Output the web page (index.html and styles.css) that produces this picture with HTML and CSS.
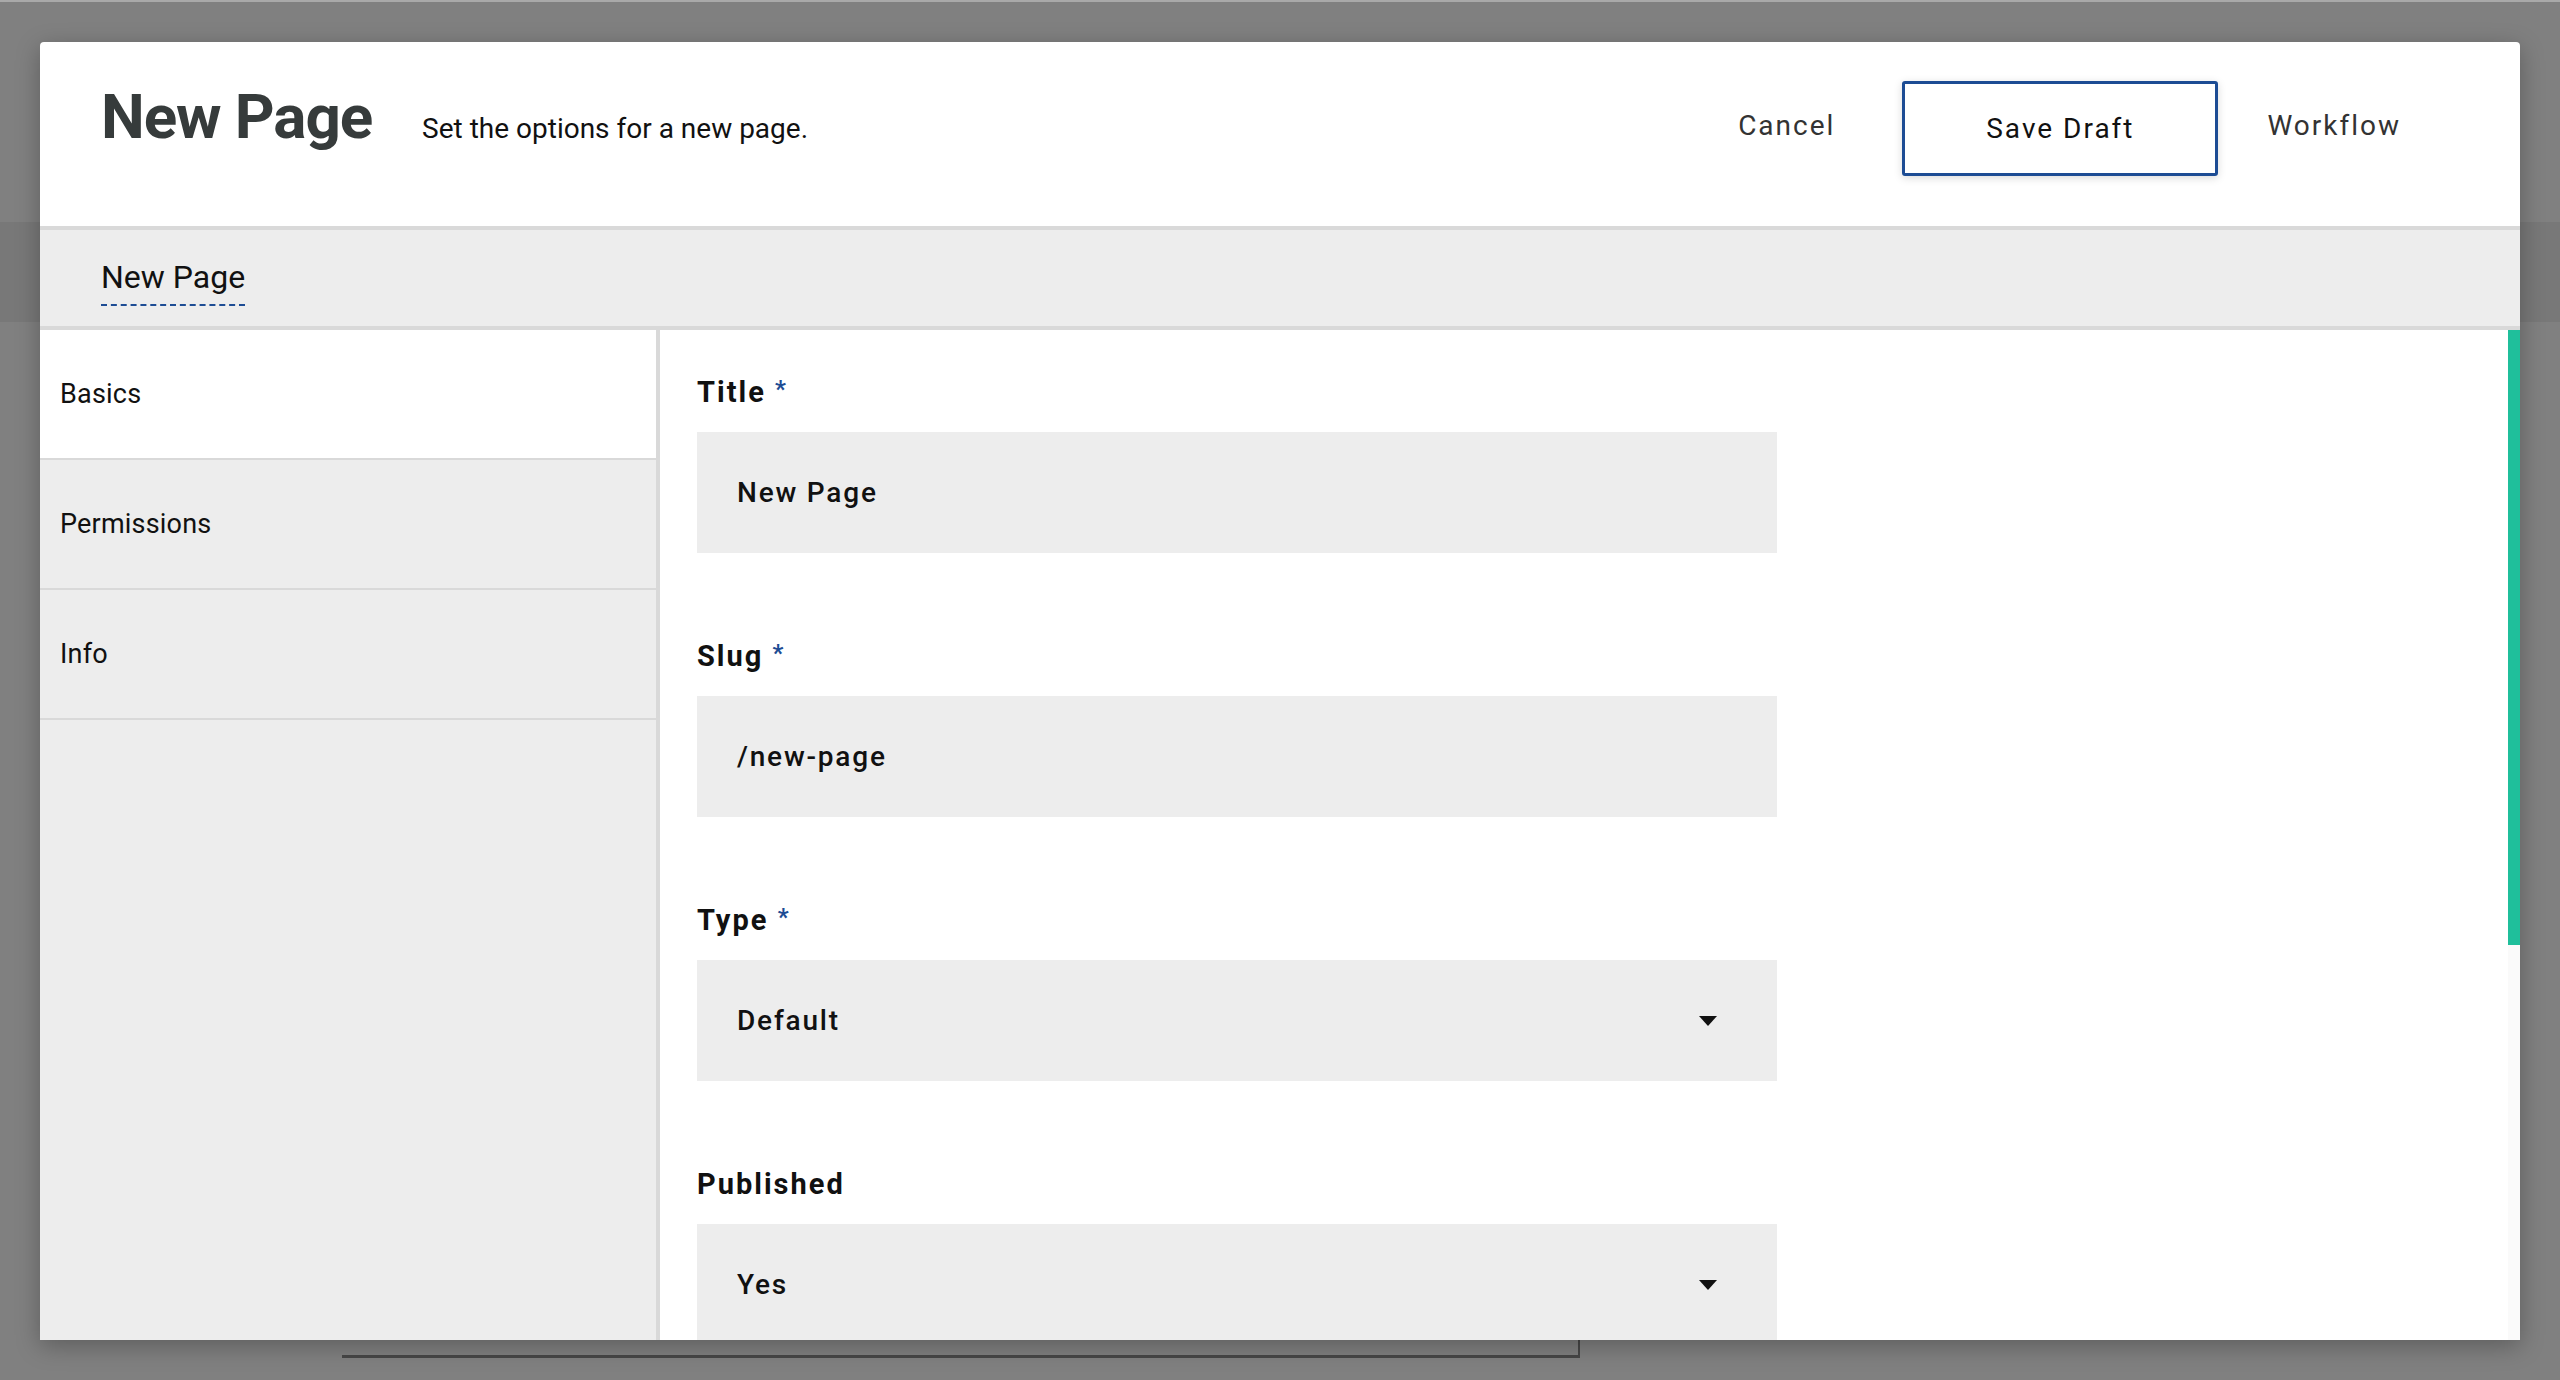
FILE: index.html
```html
<!DOCTYPE html>
<html lang="en">
<head>
<meta charset="utf-8">
<title>New Page</title>
<link rel="stylesheet" href="styles.css">
</head>
<body>
<div class="underlay">
  <div class="u-top"></div>
  <div class="u-bar"></div>
  <div class="u-box"></div>
</div>

<div class="modal">
  <header class="modal-header">
    <h1 class="modal-title">New Page</h1>
    <p class="modal-subtitle">Set the options for a new page.</p>
    <div class="actions">
      <span class="action action-link">Cancel</span>
      <span class="action action-primary">Save Draft</span>
      <span class="action action-link">Workflow</span>
    </div>
  </header>

  <nav class="breadcrumb">
    <span class="crumb">New Page</span>
  </nav>

  <div class="modal-body">
    <aside class="sidebar">
      <div class="tab tab-active">Basics</div>
      <div class="tab">Permissions</div>
      <div class="tab">Info</div>
    </aside>

    <main class="content">
      <div class="field">
        <div class="label">Title <span class="req">*</span></div>
        <div class="input">New Page</div>
      </div>
      <div class="field">
        <div class="label">Slug <span class="req">*</span></div>
        <div class="input">/new-page</div>
      </div>
      <div class="field">
        <div class="label">Type <span class="req">*</span></div>
        <div class="input select"><span>Default</span><span class="caret"></span></div>
      </div>
      <div class="field">
        <div class="label">Published</div>
        <div class="input select"><span>Yes</span><span class="caret"></span></div>
      </div>
      <div class="scrollbar"><div class="thumb"></div></div>
    </main>
  </div>
</div>
</body>
</html>
```

FILE: styles.css
```css
* {
  box-sizing: border-box;
}

html, body {
  margin: 0;
  padding: 0;
}

body {
  width: 2560px;
  height: 1380px;
  overflow: hidden;
  background: #808080;
  font-family: Roboto, "Liberation Sans", Arial, sans-serif;
  position: relative;
}

/* underlying page, dimmed */
.underlay {
  position: absolute;
  inset: 0;
  overflow: hidden;
}

.u-top {
  height: 2px;
  background: #a9a9a9;
}

.u-bar {
  margin-top: 220px;
  height: 100px;
  background: #787878;
}

.u-box {
  margin-left: 342px;
  margin-top: 200px;
  width: 1238px;
  height: 836px;
  border-right: 2px solid #474747;
  border-bottom: 3px solid #474747;
}

/* modal */
.modal {
  position: absolute;
  top: 42px;
  left: 40px;
  width: 2480px;
  height: 1298px;
  background: #ffffff;
  border-radius: 4px 4px 0 0;
  box-shadow: 0 6px 24px rgba(0, 0, 0, 0.28);
  display: flex;
  flex-direction: column;
  overflow: hidden;
}

.modal-header {
  height: 188px;
  flex: none;
  display: flex;
  align-items: baseline;
  padding: 39px 119px 0 61px;
  border-bottom: 4px solid #d9d9d9;
}

.modal-title {
  margin: 0;
  font-size: 62px;
  line-height: 62px;
  font-weight: 700;
  letter-spacing: -1.1px;
  color: #363b3b;
}

.modal-subtitle {
  margin: 0 0 0 50px;
  font-size: 28px;
  line-height: 40px;
  color: #111111;
}

.actions {
  margin-left: auto;
  display: flex;
  align-items: baseline;
}

.action {
  font-size: 28px;
  letter-spacing: 2px;
}

.action-link {
  color: #333333;
  line-height: 40px;
  position: relative;
  top: -3px;
}

.action-primary {
  margin: 0 49px 0 67px;
  width: 316px;
  height: 95px;
  line-height: 89px;
  text-align: center;
  border: 3px solid #1d4c94;
  border-radius: 3px;
  color: #111111;
  box-shadow: 0 2px 8px rgba(0, 0, 0, 0.15);
}

/* breadcrumb */
.breadcrumb {
  height: 100px;
  flex: none;
  background: #ededed;
  border-bottom: 4px solid #d9d9d9;
  padding: 27px 0 0 61px;
}

.crumb {
  display: inline-block;
  font-size: 32px;
  line-height: 40px;
  color: #111111;
  padding-bottom: 7px;
  border-bottom: 2px dashed #1d4c94;
}

/* body */
.modal-body {
  flex: 1;
  min-height: 0;
  display: flex;
}

.sidebar {
  width: 620px;
  flex: none;
  background: #ededed;
  border-right: 4px solid #d9d9d9;
}

.tab {
  height: 130px;
  display: flex;
  align-items: center;
  padding-left: 20px;
  border-bottom: 2px solid #d9d9d9;
  font-size: 27px;
  letter-spacing: 0.2px;
  color: #111111;
}

.tab-active {
  background: #ffffff;
}

.content {
  flex: 1;
  position: relative;
  overflow: hidden;
  padding: 42px 0 0 37px;
}

.field {
  margin-bottom: 83px;
}

.label {
  font-size: 29px;
  line-height: 40px;
  font-weight: 700;
  letter-spacing: 2px;
  color: #111111;
}

.req {
  font-size: 24px;
  line-height: 1;
  color: #1d4c94;
  letter-spacing: 0;
  vertical-align: 5px;
}

.input {
  margin-top: 20px;
  width: 1080px;
  height: 121px;
  background: #ededed;
  display: flex;
  align-items: center;
  padding: 0 60px 0 40px;
  font-size: 28px;
  font-weight: 500;
  letter-spacing: 1.8px;
  color: #111111;
}

.select {
  justify-content: space-between;
}

.caret {
  width: 0;
  height: 0;
  border-left: 9px solid transparent;
  border-right: 9px solid transparent;
  border-top: 10px solid #111111;
}

.scrollbar {
  position: absolute;
  top: 0;
  right: 0;
  bottom: 0;
  width: 12px;
  background: #fafafa;
}

.thumb {
  height: 615px;
  background: #1fbf9b;
}
```
